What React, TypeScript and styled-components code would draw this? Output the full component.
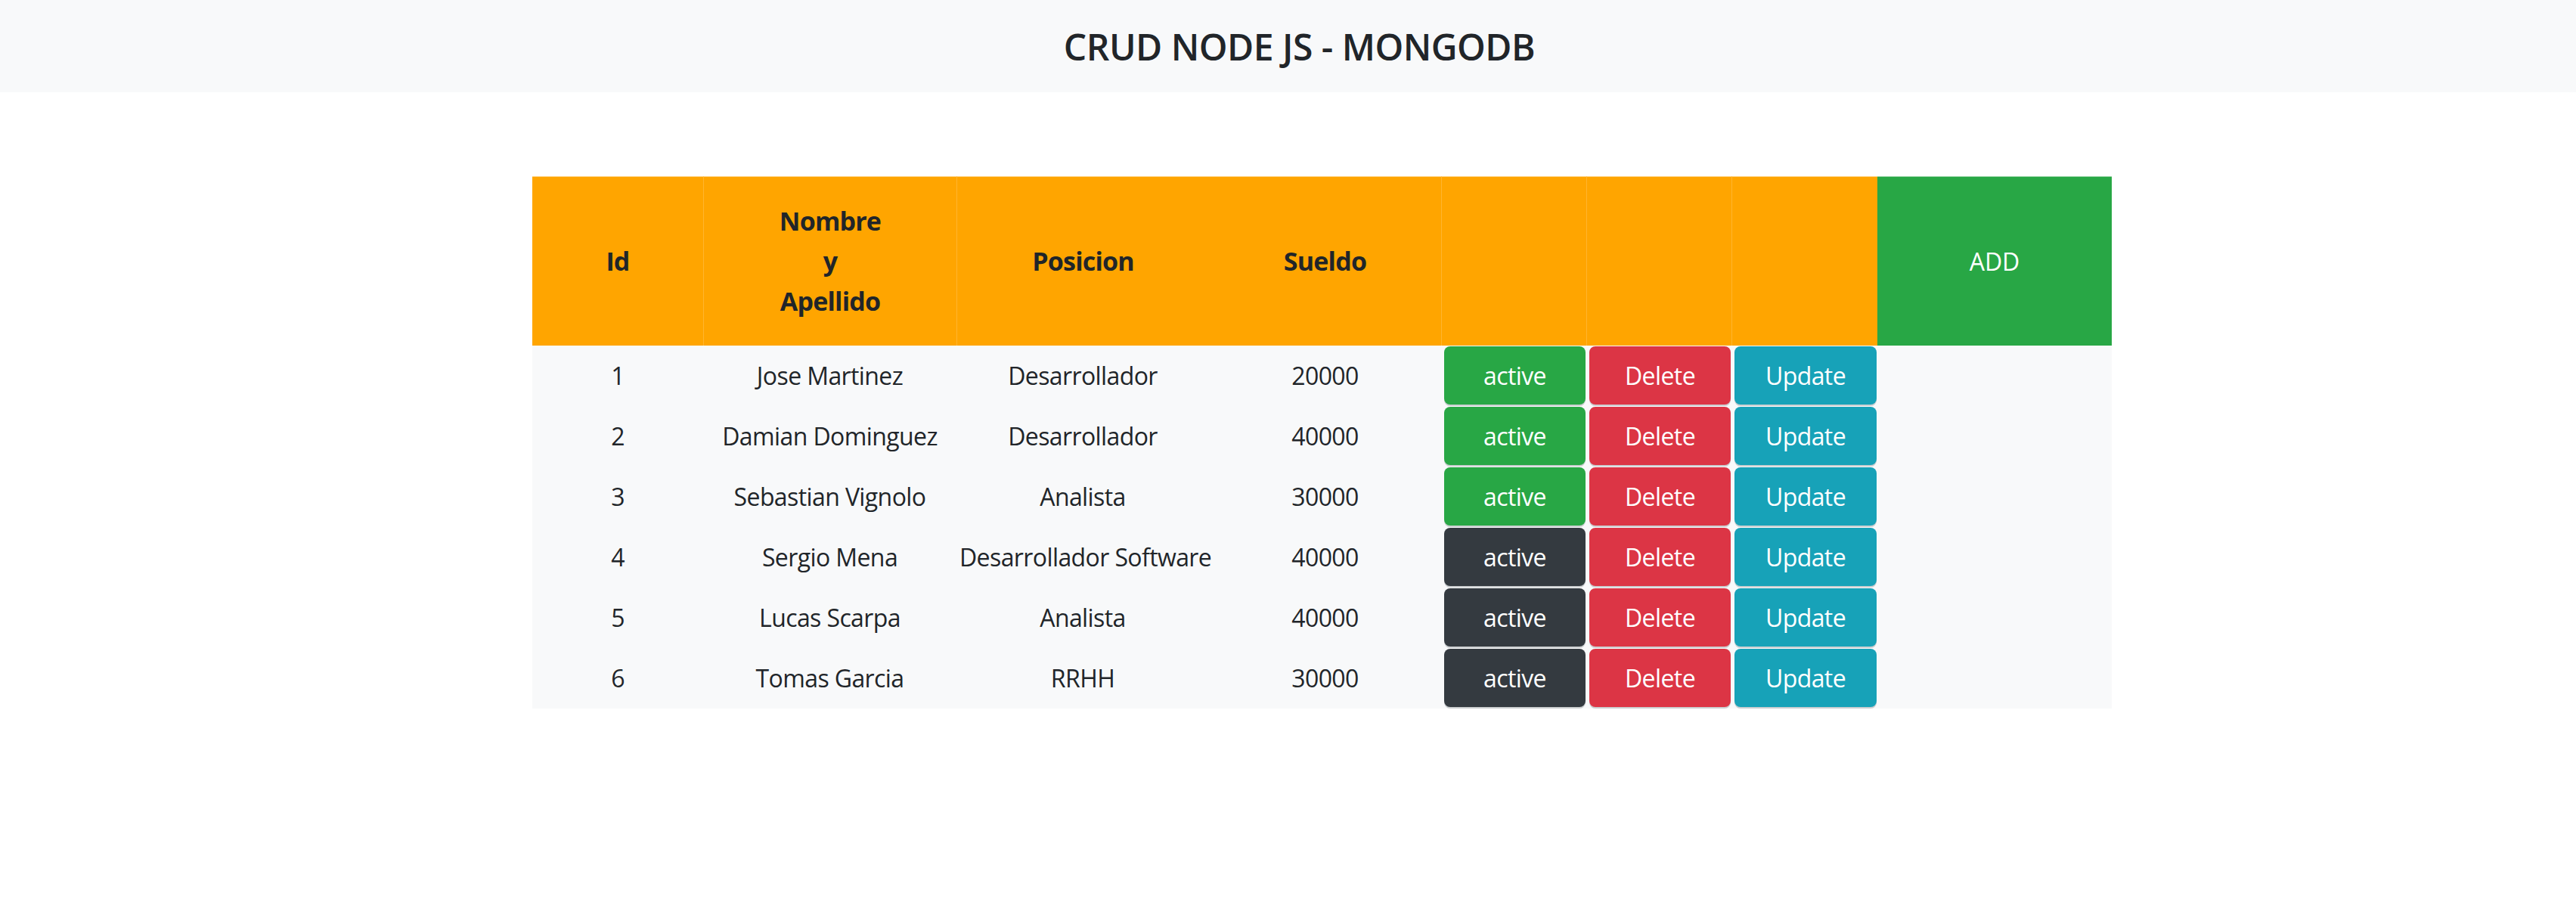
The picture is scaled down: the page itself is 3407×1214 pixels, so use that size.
import React from "react";
import styled, { createGlobalStyle } from "styled-components";

const GlobalStyle = createGlobalStyle`
  html, body {
    margin: 0;
    padding: 0;
    background: #ffffff;
  }
  body {
    font-family: "Open Sans", "Noto Sans", "Liberation Sans", sans-serif;
    color: #212529;
  }
`;

const NavBar = styled.header`
  height: 122px;
  background: #f8f9fa;
  display: flex;
  align-items: center;
  justify-content: center;
  padding-left: 30px;
  box-sizing: border-box;
`;

const Title = styled.h1`
  margin: 0;
  font-size: 48px;
  font-weight: 600;
  letter-spacing: -0.5px;
  color: #212529;
`;

const Main = styled.main`
  padding: 111px 614px 0 704px;
`;

const Table = styled.table`
  width: 2089px;
  table-layout: fixed;
  border-collapse: separate;
  border-spacing: 0;
`;

const HeadRow = styled.tr`
  height: 223px;
`;

const HeadCell = styled.th<{ $tone?: "orange" | "green"; $divider?: boolean }>`
  box-sizing: border-box;
  padding: 32px 8px;
  background: ${(p) => (p.$tone === "green" ? "#28a745" : "#ffa500")};
  color: ${(p) => (p.$tone === "green" ? "#ffffff" : "#212529")};
  font-size: ${(p) => (p.$tone === "green" ? "32px" : "34px")};
  font-weight: ${(p) => (p.$tone === "green" ? 400 : 700)};
  letter-spacing: ${(p) => (p.$tone === "green" ? "0" : "-0.8px")};
  line-height: 53px;
  text-align: center;
  vertical-align: middle;
  border-top: 1px solid rgba(255, 255, 255, 0.5);
  border-left: ${(p) => (p.$divider ? "1px solid rgba(255, 255, 255, 0.18)" : "none")};
`;

const BodyRow = styled.tr`
  height: 80px;
  background: #f8f9fa;
`;

const Cell = styled.td`
  box-sizing: border-box;
  padding: 0 4px;
  font-size: 32px;
  font-weight: 400;
  letter-spacing: -0.6px;
  line-height: 48px;
  text-align: center;
  vertical-align: middle;
  white-space: nowrap;
  color: #212529;
`;

const ActionCell = styled.td`
  box-sizing: border-box;
  padding: 1px 1px 2px 4px;
  vertical-align: top;
`;

type Variant = "success" | "dark" | "danger" | "info";

const variantColors: Record<Variant, string> = {
  success: "#28a745",
  dark: "#343a40",
  danger: "#dc3545",
  info: "#17a2b8",
};

const ActionButton = styled.button<{ $variant: Variant }>`
  display: flex;
  align-items: center;
  justify-content: center;
  width: 100%;
  height: 77px;
  margin: 0;
  padding: 0 8px;
  border: none;
  border-radius: 8px;
  background: ${(p) => variantColors[p.$variant]};
  color: #ffffff;
  font-family: "Open Sans", "Noto Sans", "Liberation Sans", sans-serif;
  font-size: 32px;
  font-weight: 400;
  letter-spacing: -0.6px;
  box-shadow: 0 2px 0 rgba(52, 58, 64, 0.22);
  cursor: pointer;
`;

const employees = [
  { id: 1, name: "Jose Martinez", position: "Desarrollador", salary: 20000, active: true },
  { id: 2, name: "Damian Dominguez", position: "Desarrollador", salary: 40000, active: true },
  { id: 3, name: "Sebastian Vignolo", position: "Analista", salary: 30000, active: true },
  { id: 4, name: "Sergio Mena", position: "Desarrollador Software", salary: 40000, active: false },
  { id: 5, name: "Lucas Scarpa", position: "Analista", salary: 40000, active: false },
  { id: 6, name: "Tomas Garcia", position: "RRHH", salary: 30000, active: false },
];

const columnWidths = [226, 335, 334, 307, 192, 192, 193, 310];

export default function App() {
  return (
    <>
      <GlobalStyle />
      <NavBar>
        <Title>CRUD NODE JS - MONGODB</Title>
      </NavBar>
      <Main>
        <Table>
          <colgroup>
            {columnWidths.map((w, i) => (
              <col key={i} style={{ width: w }} />
            ))}
          </colgroup>
          <thead>
            <HeadRow>
              <HeadCell>Id</HeadCell>
              <HeadCell $divider>
                Nombre
                <br />y<br />
                Apellido
              </HeadCell>
              <HeadCell $divider>Posicion</HeadCell>
              <HeadCell>Sueldo</HeadCell>
              <HeadCell $divider />
              <HeadCell $divider />
              <HeadCell $divider />
              <HeadCell $tone="green">ADD</HeadCell>
            </HeadRow>
          </thead>
          <tbody>
            {employees.map((e) => (
              <BodyRow key={e.id}>
                <Cell>{e.id}</Cell>
                <Cell>{e.name}</Cell>
                <Cell>{e.position}</Cell>
                <Cell>{e.salary}</Cell>
                <ActionCell>
                  <ActionButton $variant={e.active ? "success" : "dark"}>active</ActionButton>
                </ActionCell>
                <ActionCell>
                  <ActionButton $variant="danger">Delete</ActionButton>
                </ActionCell>
                <ActionCell>
                  <ActionButton $variant="info">Update</ActionButton>
                </ActionCell>
                <Cell />
              </BodyRow>
            ))}
          </tbody>
        </Table>
      </Main>
    </>
  );
}
